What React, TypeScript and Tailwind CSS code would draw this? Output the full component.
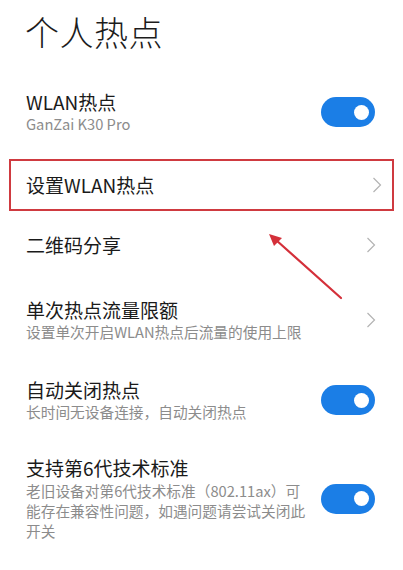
import React from 'react';

const FONT = { fontFamily: '"Noto Sans CJK SC", "Noto Sans", sans-serif' };

const Toggle: React.FC = () => (
  <div className="w-[54px] h-[30px] rounded-full bg-[#1b7ee6] flex items-center justify-end pr-[6px] shrink-0">
    <div className="w-[15px] h-[15px] rounded-full bg-white" />
  </div>
);

const Chevron: React.FC = () => (
  <svg width="10" height="16" viewBox="0 0 10 16" className="shrink-0">
    <path d="M1.5 1 L8.5 8 L1.5 15" fill="none" stroke="#b3b3b3" strokeWidth="1.2" />
  </svg>
);

const App: React.FC = () => {
  return (
    <div className="relative w-[403px] h-[570px] bg-white overflow-hidden" style={FONT}>
      <h1 className="pt-[13px] pl-[25px] text-[34px] leading-[38px] font-extralight text-[#1c1c1c] tracking-[0.5px]">个人热点</h1>

      {/* WLAN热点 */}
      <div className="mt-[39px] flex items-center justify-between pl-[26px] pr-[28px]">
        <div>
          <div className="text-[19px] leading-[24px] text-[#1a1a1a]">WLAN热点</div>
          <div className="text-[14.7px] leading-[20px] text-[#8c8c8c]">GanZai K30 Pro</div>
        </div>
        <Toggle />
      </div>

      {/* 设置WLAN热点 (highlighted) */}
      <div className="mt-[25px] mx-[9px] h-[52px] border-2 border-[#cf3a40] flex items-center justify-between pl-[15px] pr-[10px]">
        <span className="text-[19px] leading-[24px] text-[#1a1a1a]">设置WLAN热点</span>
        <Chevron />
      </div>

      {/* 二维码分享 */}
      <div className="mt-[22px] h-[24px] flex items-center justify-between pl-[26px] pr-[27px]">
        <span className="text-[19px] leading-[24px] text-[#1a1a1a]">二维码分享</span>
        <Chevron />
      </div>

      {/* 单次热点流量限额 */}
      <div className="mt-[41px] flex items-center justify-between pl-[26px] pr-[27px]">
        <div>
          <div className="text-[19px] leading-[24px] text-[#1a1a1a]">单次热点流量限额</div>
          <div className="text-[14.7px] leading-[20px] text-[#8c8c8c]">设置单次开启WLAN热点后流量的使用上限</div>
        </div>
        <Chevron />
      </div>

      {/* 自动关闭热点 */}
      <div className="mt-[36px] flex items-center justify-between pl-[26px] pr-[28px]">
        <div>
          <div className="text-[19px] leading-[24px] text-[#1a1a1a]">自动关闭热点</div>
          <div className="text-[14.7px] leading-[20px] text-[#8c8c8c]">长时间无设备连接，自动关闭热点</div>
        </div>
        <Toggle />
      </div>

      {/* 支持第6代技术标准 */}
      <div className="mt-[34px] flex items-center justify-between pl-[26px] pr-[28px]">
        <div className="w-[286px]">
          <div className="text-[19px] leading-[24px] text-[#1a1a1a]">支持第6代技术标准</div>
          <div className="mt-[1px] text-[14.7px] leading-[20px] text-[#8c8c8c]">老旧设备对第6代技术标准（802.11ax）可能存在兼容性问题，如遇问题请尝试关闭此开关</div>
        </div>
        <Toggle />
      </div>

      {/* annotation arrow */}
      <svg className="absolute left-0 top-0 pointer-events-none" width="403" height="570">
        <line x1="341" y1="298" x2="276" y2="240" stroke="#d4303a" strokeWidth="2.2" strokeLinecap="round" />
        <polygon points="269,234 282,238 274,246" fill="#d4303a" />
      </svg>
    </div>
  );
};

export default App;
